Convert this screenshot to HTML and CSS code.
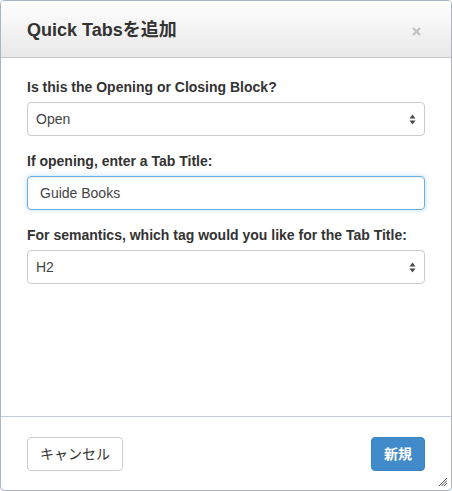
FILE: index.html
```html
<!DOCTYPE html>
<html lang="ja">
<head>
<meta charset="utf-8">
<title>Quick Tabsを追加</title>
<link rel="stylesheet" href="styles.css">
</head>
<body>
<div class="dialog">
  <div class="header">
    <h3 class="title">Quick Tabsを追加</h3>
    <button class="close" type="button" aria-label="close">
      <svg width="9" height="9" viewBox="0 0 9 9"><path d="M1 1 L8 8 M8 1 L1 8" stroke="#c2c2c2" stroke-width="2.4" stroke-linecap="butt"/></svg>
    </button>
  </div>
  <div class="body">
    <div class="group">
      <label class="label">Is this the Opening or Closing Block?</label>
      <div class="select-wrap">
        <select class="control select"><option>Open</option><option>Close</option></select>
        <svg class="arrows" width="7" height="11" viewBox="0 0 7 11"><path d="M3.5 0.5 L6.5 4.5 L0.5 4.5 Z M0.5 6.5 L6.5 6.5 L3.5 10.5 Z" fill="#4a4a4a"/></svg>
      </div>
    </div>
    <div class="group">
      <label class="label">If opening, enter a Tab Title:</label>
      <input class="control input focus" type="text" value="Guide Books">
    </div>
    <div class="group">
      <label class="label">For semantics, which tag would you like for the Tab Title:</label>
      <div class="select-wrap">
        <select class="control select"><option>H2</option><option>H3</option></select>
        <svg class="arrows" width="7" height="11" viewBox="0 0 7 11"><path d="M3.5 0.5 L6.5 4.5 L0.5 4.5 Z M0.5 6.5 L6.5 6.5 L3.5 10.5 Z" fill="#4a4a4a"/></svg>
      </div>
    </div>
  </div>
  <div class="footer">
    <button class="btn btn-default" type="button">キャンセル</button>
    <button class="btn btn-primary" type="button">新規</button>
  </div>
  <svg class="grip" width="8" height="8" viewBox="0 0 8 8"><path d="M8 0 L0 8 M8 2.5 L2.5 8 M8 5 L5 8" stroke="#555" stroke-width="1"/></svg>
</div>
</body>
</html>
```
FILE: styles.css
```css
* { box-sizing: border-box; }
html, body {
  margin: 0;
  padding: 0;
  background: #fff;
}
body {
  font-family: "Liberation Sans", Arial, "Noto Sans CJK JP", sans-serif;
  color: #333;
  font-size: 14px;
}
.dialog {
  position: relative;
  width: 452px;
  height: 491px;
  border: 1px solid #a9b6c3;
  border-radius: 4px;
  display: flex;
  flex-direction: column;
  overflow: hidden;
  background: #fff;
}
.header {
  height: 57px;
  flex: none;
  background: linear-gradient(to bottom, #ffffff 0%, #e8e8e8 100%);
  border-bottom: 1px solid #c6c6c6;
  display: flex;
  align-items: flex-start;
  justify-content: space-between;
  padding: 19px 26px 0 26px;
}
.title {
  margin: 0;
  font-size: 18px;
  line-height: 20px;
  font-weight: bold;
  color: #333;
}
.close {
  border: 0;
  background: none;
  padding: 0;
  margin: 7px 4px 0 0;
  width: 9px;
  height: 9px;
  display: block;
}
.close svg { display: block; }
.body {
  flex: 1;
  padding: 20px 26px 0 26px;
}
.group { margin-bottom: 16px; }
.label {
  display: block;
  font-size: 14px;
  line-height: 19px;
  font-weight: bold;
  margin-bottom: 5px;
  color: #333;
}
.control {
  display: block;
  width: 100%;
  height: 34px;
  font-family: "Liberation Sans", Arial, "Noto Sans CJK JP", sans-serif;
  font-size: 14px;
  color: #444;
  background: #fff;
  border: 1px solid #cccccc;
  border-radius: 4px;
  margin: 0;
}
.select-wrap { position: relative; }
.select {
  appearance: none;
  -webkit-appearance: none;
  padding: 0 24px 0 8px;
}
.arrows {
  position: absolute;
  right: 9px;
  top: 12px;
}
.input {
  padding: 0 12px;
}
.input.focus {
  border-color: #6aaee8;
  outline: none;
  box-shadow: inset 0 1px 1px rgba(0,0,0,.05), 0 0 5px rgba(102,175,233,.45);
}
.footer {
  flex: none;
  height: 74px;
  border-top: 1px solid #c3ccd5;
  padding: 20px 26px 0 26px;
  display: flex;
  justify-content: space-between;
  align-items: flex-start;
}
.btn {
  height: 34px;
  padding: 0 12px;
  font-family: "Liberation Sans", Arial, "Noto Sans CJK JP", sans-serif;
  font-size: 14px;
  line-height: 32px;
  border-radius: 4px;
  border: 1px solid #ccc;
  background: #fff;
  color: #333;
}
.btn-primary {
  background: #428bca;
  border-color: #3d84c3;
  color: #fff;
  font-weight: bold;
}
.grip {
  position: absolute;
  right: 4px;
  bottom: 4px;
}
```
